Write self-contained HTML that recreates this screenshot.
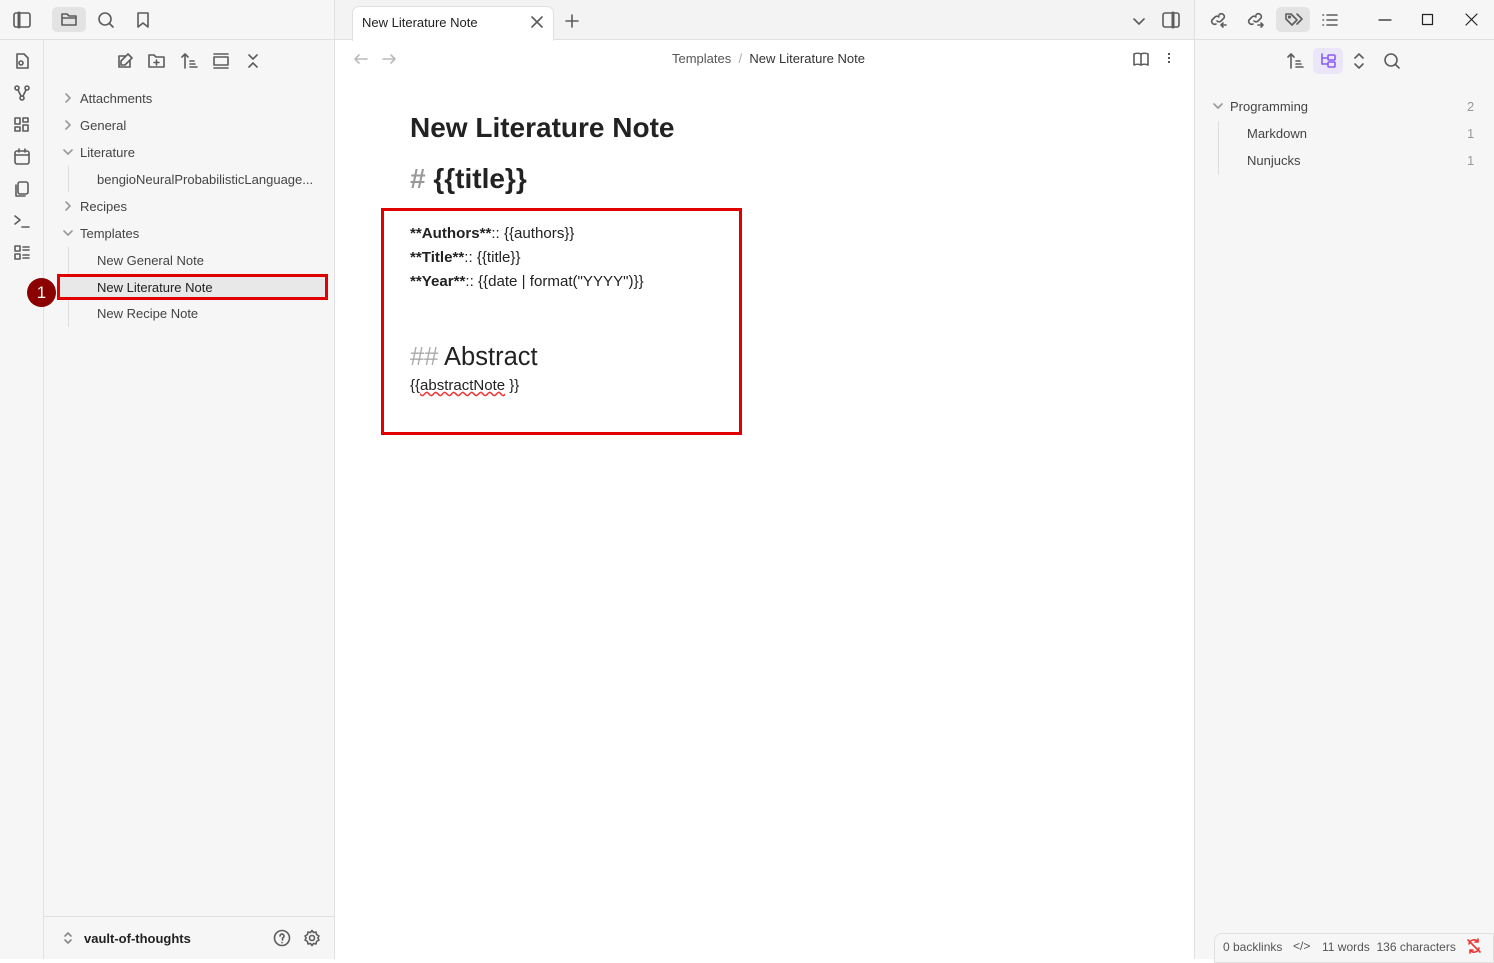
<!DOCTYPE html>
<html><head><style>
*{box-sizing:border-box;margin:0;padding:0}
body{width:1494px;height:959px;overflow:hidden;font-family:"Liberation Sans",sans-serif;background:#fff;position:relative;color:#222}
.abs{position:absolute}
svg{position:absolute;fill:none;stroke:#5c5c5c;stroke-width:1.6;stroke-linecap:round;stroke-linejoin:round}
.t{position:absolute;font-size:13px;color:#444;white-space:nowrap}
</style></head><body>
<div class="abs" style="left:0;top:0;width:335px;height:959px;background:#f6f6f6;border-right:1px solid #e0e0e0"></div>
<div class="abs" style="left:0;top:39px;width:335px;height:1px;background:#e0e0e0"></div>
<div class="abs" style="left:43px;top:40px;width:1px;height:919px;background:#e0e0e0"></div>
<div class="abs" style="left:44px;top:916px;width:290px;height:1px;background:#e0e0e0"></div>
<div class="abs" style="left:1194px;top:0;width:300px;height:959px;background:#f6f6f6;border-left:1px solid #e0e0e0"></div>
<div class="abs" style="left:1195px;top:39px;width:299px;height:1px;background:#e0e0e0"></div>
<div class="abs" style="left:335px;top:0;width:859px;height:40px;background:#f3f3f3;border-bottom:1px solid #e0e0e0"></div>
<div class="abs" style="left:352px;top:6px;width:202px;height:35px;background:#fff;border:1px solid #e0e0e0;border-bottom:none;border-radius:7px 7px 0 0"></div>
<div class="t" style="left:362px;top:15px;color:#222">New Literature Note</div>
<svg style="left:530px;top:15px" width="14" height="14"><path d="M2 2L12 12M12 2L2 12"/></svg>
<svg style="left:564px;top:13px" width="16" height="16"><path d="M8 2V14M2 8H14"/></svg>
<svg style="left:1131px;top:13px" width="16" height="16"><path d="M3 6L8 11L13 6"/></svg>
<svg style="left:1161px;top:11px" width="20" height="18"><rect x="2" y="2" width="16" height="14" rx="2"/><path d="M12 2V16" stroke-width="3"/></svg>

<svg style="left:12px;top:11px" width="20" height="18"><rect x="2" y="2" width="16" height="14" rx="2"/><path d="M7 2V16" stroke-width="3"/></svg>
<div class="abs" style="left:52px;top:7px;width:34px;height:25px;background:#e3e3e3;border-radius:5px"></div>
<svg style="left:60px;top:11px" width="18" height="16"><path d="M2 3H7L9 5H16V14H2Z M2 7H16"/></svg>
<svg style="left:97px;top:11px" width="18" height="18"><circle cx="8" cy="8" r="6"/><path d="M12.5 12.5L16 16"/></svg>
<svg style="left:135px;top:11px" width="16" height="18"><path d="M3 2H13V16L8 12L3 16Z"/></svg>

<svg style="left:13px;top:52px" width="18" height="18"><path d="M4 2H11L15 6V16H4Z"/><circle cx="8" cy="11" r="2"/></svg>
<svg style="left:13px;top:84px" width="18" height="18"><circle cx="4" cy="4" r="2"/><circle cx="14" cy="4" r="2"/><circle cx="9" cy="14" r="2"/><path d="M5 6L8 12M13 6L10 12"/></svg>
<svg style="left:13px;top:116px" width="18" height="18"><rect x="2" y="2" width="5" height="6"/><rect x="10" y="2" width="5" height="4"/><rect x="2" y="11" width="5" height="4"/><rect x="10" y="9" width="5" height="6"/></svg>
<svg style="left:13px;top:148px" width="18" height="18"><rect x="2" y="3" width="14" height="13" rx="2"/><path d="M2 7H16M6 1V4M12 1V4"/></svg>
<svg style="left:13px;top:180px" width="18" height="18"><rect x="5" y="2" width="10" height="12" rx="2"/><path d="M3 5V16H12"/></svg>
<svg style="left:13px;top:212px" width="18" height="18"><path d="M2 4L7 8L2 12M9 15H16"/></svg>
<svg style="left:13px;top:244px" width="18" height="18"><rect x="2" y="2" width="5" height="5"/><rect x="2" y="10" width="5" height="5"/><path d="M10 3H16M10 6H16M10 11H16M10 14H16"/></svg>

<svg style="left:116px;top:52px" width="18" height="18"><path d="M14 9V15H3V4H9M12 2L16 6L9 13H5V9Z"/></svg>
<svg style="left:147px;top:52px" width="20" height="18"><path d="M2 3H7L9 5H17V15H2Z M9.5 8V13M7 10.5H12"/></svg>
<svg style="left:180px;top:52px" width="18" height="18"><path d="M5 16V2M2 5L5 2L8 5M10 9H14M10 12H15M10 15H17"/></svg>
<svg style="left:212px;top:52px" width="18" height="18"><path d="M2 2H16M2 16H16"/><rect x="2" y="5" width="14" height="8"/></svg>
<svg style="left:245px;top:52px" width="16" height="18"><path d="M4 3L8 7L12 3M4 15L8 11L12 15"/></svg>

<svg style="left:62px;top:92px" width="12" height="12"><path d="M4 2L8 6L4 10" stroke="#999"/></svg>
<div class="t" style="left:80px;top:91px">Attachments</div>
<svg style="left:62px;top:119px" width="12" height="12"><path d="M4 2L8 6L4 10" stroke="#999"/></svg>
<div class="t" style="left:80px;top:118px">General</div>
<svg style="left:62px;top:146px" width="12" height="12"><path d="M2 4L6 8L10 4" stroke="#999"/></svg>
<div class="t" style="left:80px;top:145px">Literature</div>
<div class="abs" style="left:68px;top:166px;width:1px;height:26px;background:#ddd"></div>
<div class="t" style="left:97px;top:172px">bengioNeuralProbabilisticLanguage...</div>
<svg style="left:62px;top:200px" width="12" height="12"><path d="M4 2L8 6L4 10" stroke="#999"/></svg>
<div class="t" style="left:80px;top:199px">Recipes</div>
<svg style="left:62px;top:227px" width="12" height="12"><path d="M2 4L6 8L10 4" stroke="#999"/></svg>
<div class="t" style="left:80px;top:226px">Templates</div>
<div class="abs" style="left:68px;top:247px;width:1px;height:80px;background:#ddd"></div>
<div class="t" style="left:97px;top:253px">New General Note</div>
<div class="abs" style="left:57px;top:274px;width:271px;height:26px;background:#e8e8e8;border:3px solid #e00000"></div>
<div class="t" style="left:97px;top:280px;color:#222">New Literature Note</div>
<div class="abs" style="left:27px;top:278px;width:29px;height:29px;border-radius:50%;background:#8b0000;color:#fff;font-size:17px;text-align:center;line-height:29px">1</div>
<div class="t" style="left:97px;top:306px">New Recipe Note</div>

<svg style="left:62px;top:931px" width="12" height="14"><path d="M3 5L6 2L9 5M3 9L6 12L9 9" stroke="#888"/></svg>
<div class="t" style="left:84px;top:931px;color:#222;font-weight:bold">vault-of-thoughts</div>
<svg style="left:273px;top:929px" width="18" height="18"><circle cx="9" cy="9" r="7.5"/><path d="M7 7a2 2 0 1 1 2.5 2V11M9 13.5V13.6"/></svg>
<svg style="left:303px;top:929px" width="18" height="18"><circle cx="9" cy="9" r="2.5"/><path d="M9 1.5L10.5 3.5L13 3L13.5 5.5L16 7L14.8 9L16 11L13.5 12.5L13 15L10.5 14.5L9 16.5L7.5 14.5L5 15L4.5 12.5L2 11L3.2 9L2 7L4.5 5.5L5 3L7.5 3.5Z"/></svg>

<svg style="left:353px;top:51px" width="16" height="16"><path d="M14 8H2M6 4L2 8L6 12" stroke="#bbb"/></svg>
<svg style="left:381px;top:51px" width="16" height="16"><path d="M2 8H14M10 4L14 8L10 12" stroke="#bbb"/></svg>
<div class="t" style="left:672px;top:51px;color:#555">Templates <span style="color:#aaa">&nbsp;/&nbsp;</span> <span style="color:#333">New Literature Note</span></div>
<svg style="left:1132px;top:51px" width="18" height="16"><path d="M9 3V14M9 3C7 2 4 2 2 3V14C4 13 7 13 9 14C11 13 14 13 16 14V3C14 2 11 2 9 3"/></svg>
<div class="abs" style="left:1168px;top:53px;width:2px;height:2px;background:#555;box-shadow:0 4px #555,0 8px #555"></div>

<div class="abs" style="left:410px;top:112px;font-size:28px;font-weight:bold;color:#222">New Literature Note</div>
<div class="abs" style="left:410px;top:163px;font-size:28px;font-weight:bold;color:#222"><span style="color:#999">#</span> {{title}}</div>
<div class="abs" style="left:381px;top:208px;width:361px;height:227px;border:3px solid #e00000"></div>
<div class="abs" style="left:410px;top:222px;font-size:15.1px;line-height:24px;color:#222">
<div><b>**Authors**</b>:: {{authors}}</div>
<div><b>**Title**</b>:: {{title}}</div>
<div><b>**Year**</b>:: {{date | format("YYYY")}}</div>
</div>
<div class="abs" style="left:410px;top:343px;font-size:25.5px;color:#222"><span style="color:#aaa">##</span> Abstract</div>
<div class="abs" style="left:410px;top:377px;font-size:15px;color:#222">{{<span style="text-decoration:underline wavy #e33">abstractNote</span> }}</div>

<svg style="left:1209px;top:11px" width="20" height="18"><path d="M8 10a3 3 0 0 0 4 0l3-3a3 3 0 0 0-4-4l-1 1M10 6a3 3 0 0 0-4 0l-3 3a3 3 0 0 0 4 4M17 14H12M14 12L12 14L14 16"/></svg>
<svg style="left:1246px;top:11px" width="20" height="18"><path d="M8 10a3 3 0 0 0 4 0l3-3a3 3 0 0 0-4-4l-1 1M10 6a3 3 0 0 0-4 0l-3 3a3 3 0 0 0 4 4M12 14H17M15 12L17 14L15 16"/></svg>
<div class="abs" style="left:1276px;top:7px;width:34px;height:25px;background:#e3e3e3;border-radius:5px"></div>
<svg style="left:1284px;top:11px" width="20" height="18"><path d="M2 3V8L8 14L13 9L7 3Z M13 3L18 8L13 13"/><circle cx="5.5" cy="6" r="0.8"/></svg>
<svg style="left:1321px;top:11px" width="18" height="18"><path d="M6 4H16M6 9H16M6 14H16M2 4H2.5M2 9H2.5M2 14H2.5"/></svg>
<svg style="left:1377px;top:12px" width="16" height="16"><path d="M2 8H14" stroke="#222" stroke-width="1.2"/></svg>
<svg style="left:1420px;top:12px" width="16" height="16"><rect x="2.5" y="2.5" width="10" height="10" stroke="#222" stroke-width="1.2"/></svg>
<svg style="left:1464px;top:12px" width="16" height="16"><path d="M2 2L13 13M13 2L2 13" stroke="#222" stroke-width="1.2"/></svg>

<svg style="left:1286px;top:52px" width="18" height="18"><path d="M5 16V2M2 5L5 2L8 5M10 9H14M10 12H15M10 15H17"/></svg>
<div class="abs" style="left:1313px;top:48px;width:30px;height:26px;background:#ece6fb;border-radius:5px"></div>
<svg style="left:1319px;top:52px" width="18" height="18"><path d="M3 2V12H8M3 6H8" stroke="#8a5cf5"/><rect x="9" y="3" width="7" height="5" rx="1" stroke="#8a5cf5"/><rect x="9" y="10" width="7" height="5" rx="1" stroke="#8a5cf5"/></svg>
<svg style="left:1352px;top:52px" width="14" height="18"><path d="M3 6L7 2L11 6M3 12L7 16L11 12"/></svg>
<svg style="left:1383px;top:52px" width="18" height="18"><circle cx="8" cy="8" r="6"/><path d="M12.5 12.5L16 16"/></svg>
<svg style="left:1212px;top:100px" width="12" height="12"><path d="M2 4L6 8L10 4" stroke="#999"/></svg>
<div class="t" style="left:1230px;top:99px">Programming</div>
<div class="t" style="left:1467px;top:99px;color:#999">2</div>
<div class="abs" style="left:1218px;top:121px;width:1px;height:54px;background:#ddd"></div>
<div class="t" style="left:1247px;top:126px">Markdown</div>
<div class="t" style="left:1467px;top:126px;color:#999">1</div>
<div class="t" style="left:1247px;top:153px">Nunjucks</div>
<div class="t" style="left:1467px;top:153px;color:#999">1</div>

<div class="abs" style="left:1214px;top:933px;width:280px;height:30px;background:#f6f6f6;border:1px solid #e0e0e0;border-radius:8px 0 0 0"></div>
<div class="t" style="left:1223px;top:940px;font-size:12px;color:#555">0 backlinks</div>
<div class="t" style="left:1293px;top:939px;font-size:12px;color:#555">&lt;/&gt;</div>
<div class="t" style="left:1322px;top:940px;font-size:12px;color:#555">11 words&nbsp; 136 characters</div>
<svg style="left:1466px;top:938px" width="16" height="16"><path d="M3 6a5 5 0 0 1 9-2M13 10a5 5 0 0 1-9 2M12 1V4H9M4 15V12H7M2 2L14 14" stroke="#e33"/></svg>
</body></html>
